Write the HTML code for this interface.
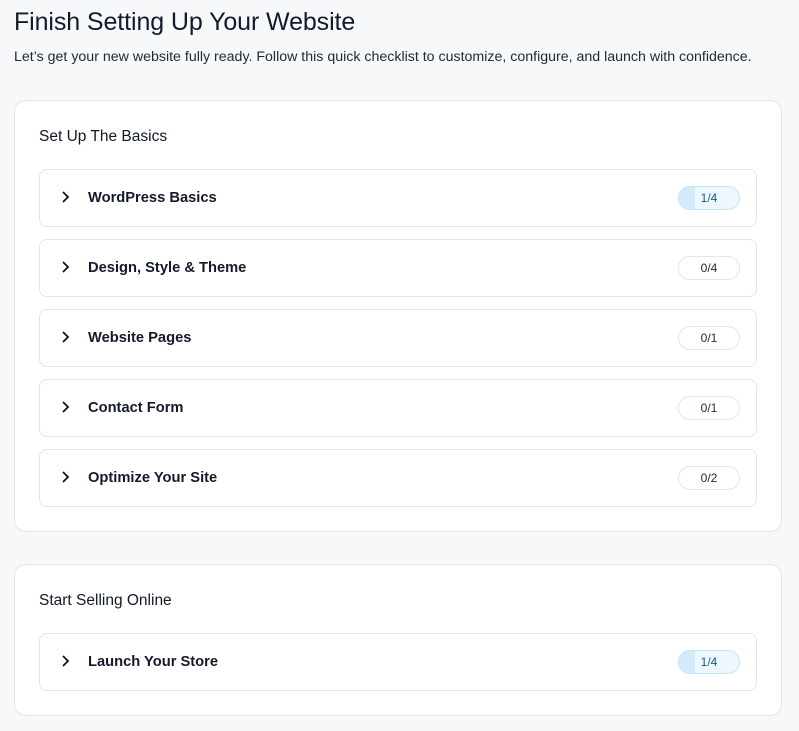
<!DOCTYPE html>
<html><head><style>
*{box-sizing:border-box;margin:0;padding:0}
body{width:799px;height:731px;background:#f7f8fa;font-family:"Liberation Sans",sans-serif;color:#111827;position:relative;overflow:hidden}
h1{position:absolute;left:14px;top:8px;font-size:25px;font-weight:500;letter-spacing:-0.1px;color:#141a2b}
p.sub{position:absolute;left:14px;top:49px;font-size:14.2px;color:#222a3a}
.card{position:absolute;left:14px;width:768px;background:#fff;border:1px solid #e3e5e9;border-radius:12px}
.card h2{position:absolute;left:24px;font-size:15.5px;font-weight:500;color:#111827}
.row{position:absolute;left:24px;width:718px;height:58px;border:1px solid #e3e5e9;border-radius:8px;background:#fff}
.row svg{position:absolute;left:21px;top:20px}
.row .t{position:absolute;left:48px;top:20px;font-size:14.7px;font-weight:700;color:#141a2b}
.b{position:absolute;left:638px;top:16px;width:62px;height:24px;border:1px solid #e3e5e9;border-radius:12px;font-size:12px;text-align:center;line-height:22px;color:#1f2937;overflow:hidden}
.b.a{background:linear-gradient(90deg,#d3ebfb 0 16px,#eef7fe 16px);border-color:#c7e3f7;color:#1e5a86}
</style></head><body>
<h1>Finish Setting Up Your Website</h1>
<p class="sub">Let’s get your new website fully ready. Follow this quick checklist to customize, configure, and launch with confidence.</p>
<div class="card" style="top:100px;height:432px">
<h2 style="top:27px">Set Up The Basics</h2>
<div class="row" style="top:68px"><svg width="10" height="14" viewBox="0 0 10 14"><path d="M2 2l5 5-5 5" fill="none" stroke="#111" stroke-width="1.8"/></svg><span class="t">WordPress Basics</span><span class="b a">1/4</span></div>
<div class="row" style="top:138px"><svg width="10" height="14" viewBox="0 0 10 14"><path d="M2 2l5 5-5 5" fill="none" stroke="#111" stroke-width="1.8"/></svg><span class="t">Design, Style &amp; Theme</span><span class="b">0/4</span></div>
<div class="row" style="top:208px"><svg width="10" height="14" viewBox="0 0 10 14"><path d="M2 2l5 5-5 5" fill="none" stroke="#111" stroke-width="1.8"/></svg><span class="t">Website Pages</span><span class="b">0/1</span></div>
<div class="row" style="top:278px"><svg width="10" height="14" viewBox="0 0 10 14"><path d="M2 2l5 5-5 5" fill="none" stroke="#111" stroke-width="1.8"/></svg><span class="t">Contact Form</span><span class="b">0/1</span></div>
<div class="row" style="top:348px"><svg width="10" height="14" viewBox="0 0 10 14"><path d="M2 2l5 5-5 5" fill="none" stroke="#111" stroke-width="1.8"/></svg><span class="t">Optimize Your Site</span><span class="b">0/2</span></div>
</div>
<div class="card" style="top:564px;height:152px">
<h2 style="top:27px">Start Selling Online</h2>
<div class="row" style="top:68px"><svg width="10" height="14" viewBox="0 0 10 14"><path d="M2 2l5 5-5 5" fill="none" stroke="#111" stroke-width="1.8"/></svg><span class="t">Launch Your Store</span><span class="b a">1/4</span></div>
</div>
</body></html>
